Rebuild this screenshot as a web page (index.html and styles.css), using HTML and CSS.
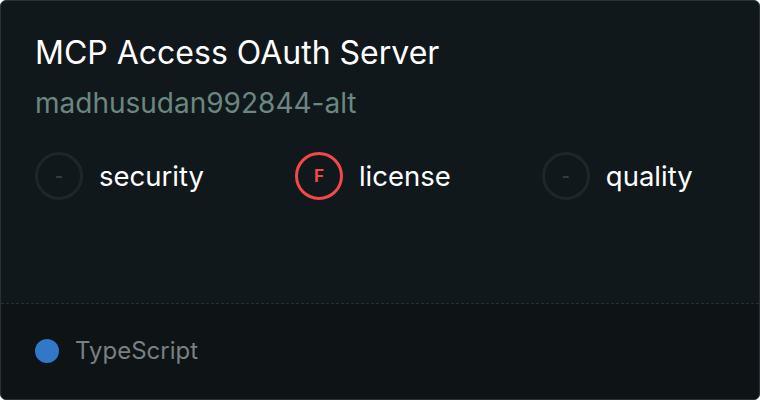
FILE: index.html
```html
<!DOCTYPE html>
<html>
<head>
<meta charset="utf-8">
<link rel="stylesheet" href="styles.css">
</head>
<body>
<div class="card">
  <div class="main">
    <div class="title">MCP Access OAuth Server</div>
    <div class="owner">madhusudan992844-alt</div>
    <div class="scores">
      <div class="score"><span class="ring none">-</span><span class="label">security</span></div>
      <div class="score"><span class="ring bad">F</span><span class="label">license</span></div>
      <div class="score"><span class="ring none">-</span><span class="label">quality</span></div>
    </div>
  </div>
  <div class="footer">
    <span class="dot"></span><span class="lang">TypeScript</span>
  </div>
</div>
</body>
</html>
```
FILE: styles.css
```css
html, body { margin: 0; padding: 0; background: #ffffff; }
body { width: 760px; height: 400px; font-family: Inter, "Noto Sans", sans-serif; }
.card {
  box-sizing: border-box;
  width: 760px; height: 400px;
  background: #11181b;
  border: 1px solid #2a3034;
  border-radius: 6px;
  display: flex; flex-direction: column;
  overflow: hidden;
}
.main { flex: 1; padding: 32px 34px 0 34px; }
.title { color: #ffffff; font-size: 32px; line-height: 40px; }
.owner { color: #6a8780; font-size: 28px; line-height: 34px; margin-top: 13px; }
.scores { display: flex; gap: 91px; margin-top: 32px; }
.score { display: flex; align-items: center; gap: 16px; }
.ring {
  box-sizing: border-box;
  width: 48px; height: 48px; border-radius: 50%;
  border: 3px solid #1f2629;
  display: flex; align-items: center; justify-content: center;
  font-size: 17px; font-weight: 700;
}
.ring.none { color: #363d40; }
.ring.bad { border-color: #f44848; color: #f44848; }
.label { color: #ffffff; font-size: 27.5px; }
.footer {
  height: 96px;
  border-top: 1px dashed #283034;
  background: #0e1316;
  display: flex; align-items: center;
  padding-left: 34px;
  gap: 16px;
  padding-bottom: 2px;
  box-sizing: border-box;
}
.dot { width: 24px; height: 24px; border-radius: 50%; background: #3178c6; }
.lang { color: #7a7f82; font-size: 24px; }
```
